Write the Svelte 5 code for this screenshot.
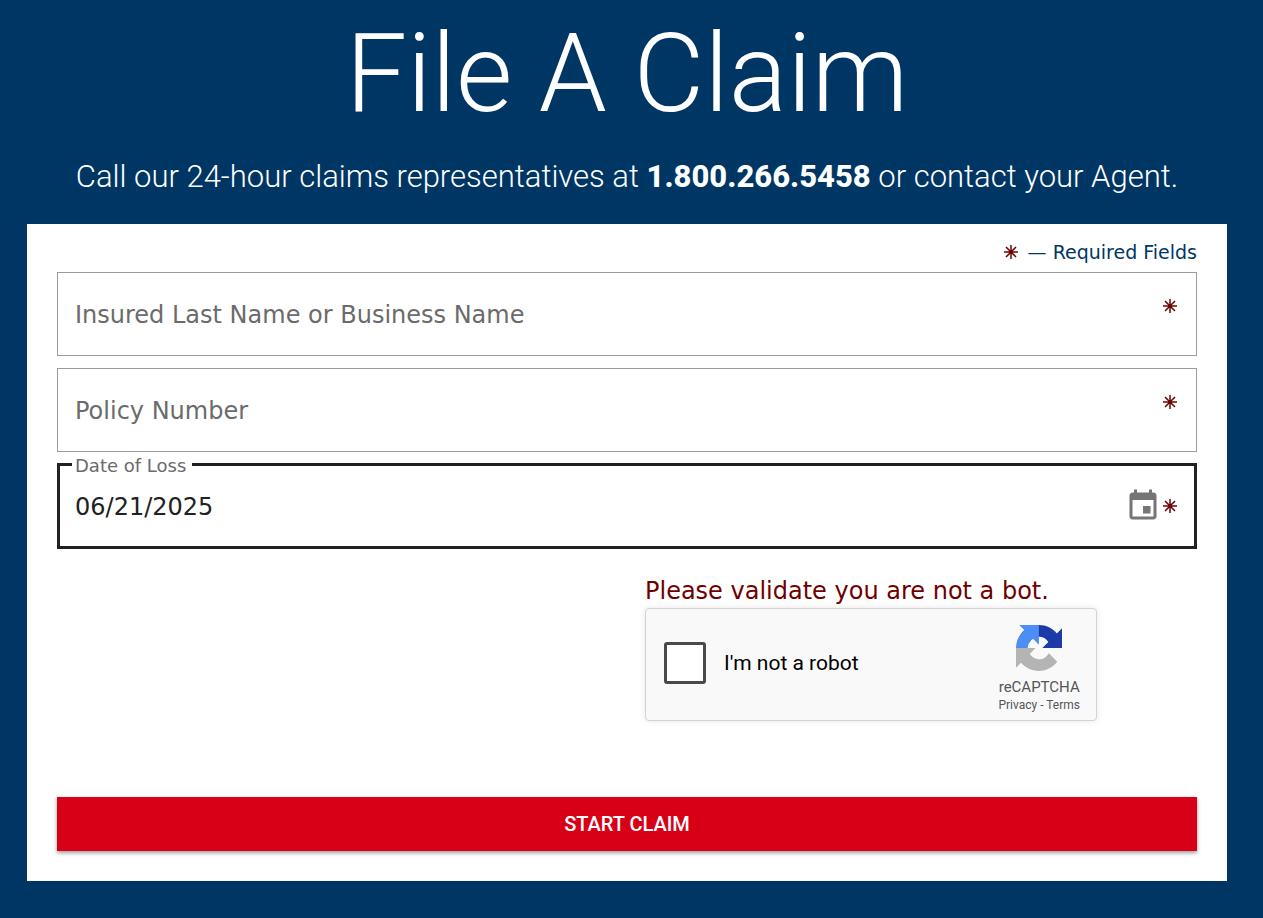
<script lang="ts">
  let form = $state({ name: "", policy: "", lossDate: "06/21/2025" });
  let notRobot = $state(false);

  const textFields = [
    { key: "name", label: "Insured Last Name or Business Name" },
    { key: "policy", label: "Policy Number" },
  ] as const;

  const submit = (event: SubmitEvent) => {
    event.preventDefault();
  };
</script>

{#snippet asterisk()}
  <svg class="asterisk" viewBox="0 0 14 14" aria-hidden="true">
    <path d="M7 0v14M0 7h14M2 2l10 10M12 2L2 12" />
    <circle cx="7" cy="7" r="1" />
  </svg>
{/snippet}

<main class="page">
  <h1>File A Claim</h1>
  <p class="intro">
    Call our 24-hour claims representatives at <strong>1.800.266.5458</strong> or contact your Agent.
  </p>

  <form class="card" onsubmit={submit}>
    <p class="required">{@render asterisk()} <span>— Required Fields</span></p>

    {#each textFields as field (field.key)}
      <div class="field">
        <input
          type="text"
          aria-label={field.label}
          placeholder={field.label}
          bind:value={form[field.key]}
        />
        {@render asterisk()}
      </div>
    {/each}

    <fieldset class="date">
      <legend><label for="loss-date">Date of Loss</label></legend>
      <div class="date-row">
        <input id="loss-date" type="text" bind:value={form.lossDate} />
        <button class="calendar" type="button" aria-label="Choose date">
          <svg viewBox="0 0 24 24" aria-hidden="true">
            <path
              d="M17 12h-5v5h5v-5zM16 1v2H8V1H6v2H5c-1.11 0-1.99.9-1.99 2L3 19c0 1.1.89 2 2 2h14c1.1 0 2-.9 2-2V5c0-1.1-.9-2-2-2h-1V1h-2zm3 18H5V8h14v11z"
            />
          </svg>
        </button>
        {@render asterisk()}
      </div>
    </fieldset>

    <div class="validate">
      <p class="error">Please validate you are not a bot.</p>
      <div class="captcha">
        <input id="robot" type="checkbox" bind:checked={notRobot} />
        <label for="robot">I'm not a robot</label>
        <div class="brand">
          <svg viewBox="0 0 64 64" aria-hidden="true">
            <path
              fill="#1c3aa9"
              d="M64 31.955l-.033-1.37V4.687l-7.16 7.16C50.948 4.674 42.033.093 32.05.093c-10.4 0-19.622 4.96-25.458 12.64l11.736 11.86a15.55 15.55 0 0 1 4.754-5.334c2.05-1.6 4.952-2.906 8.968-2.906.485 0 .86.057 1.135.163 4.976.393 9.288 3.14 11.828 7.124l-8.307 8.307L64 31.953"
            />
            <path
              fill="#4c8df6"
              d="M31.862.094l-1.37.033H4.594l7.16 7.16C4.58 13.147 0 22.06 0 32.046c0 10.4 4.96 19.622 12.64 25.458L24.5 45.768a15.55 15.55 0 0 1-5.334-4.754c-1.6-2.05-2.906-4.952-2.906-8.968 0-.485.057-.86.163-1.135.393-4.976 3.14-9.288 7.124-11.828l8.307 8.307L31.86.095"
            />
            <path
              fill="#b4b4b4"
              d="M.001 32.045l.033 1.37v25.898l7.16-7.16c5.86 7.173 14.774 11.754 24.76 11.754 10.4 0 19.622-4.96 25.458-12.64l-11.736-11.86a15.55 15.55 0 0 1-4.754 5.334c-2.05 1.6-4.952 2.906-8.968 2.906-.485 0-.86-.057-1.135-.163-4.976-.393-9.288-3.14-11.828-7.124l8.307-8.307c-10.522.04-22.4.066-27.295-.005"
            />
          </svg>
          <span class="brand-name">reCAPTCHA</span>
          <span class="links"><a href="#privacy">Privacy</a> - <a href="#terms">Terms</a></span>
        </div>
      </div>
    </div>

    <button class="start" type="submit">START CLAIM</button>
  </form>
</main>

<style>
  :global(body) {
    margin: 0;
    background: #003663;
  }

  .page {
    box-sizing: border-box;
    min-height: 100vh;
    padding: 6px 36px 37px 27px;
    background: #003663;
    color: #fff;
    font-family: "DejaVu Sans", Verdana, sans-serif;
  }

  h1 {
    margin: 0;
    font-family: Roboto, sans-serif;
    font-size: 109px;
    font-weight: 300;
    line-height: 136px;
    text-align: center;
  }

  .intro {
    margin: 15px 0 27px;
    font-family: Roboto, sans-serif;
    font-size: 31px;
    font-weight: 300;
    line-height: 40px;
    text-align: center;
  }

  .intro strong {
    font-weight: 800;
  }

  .card {
    display: flex;
    flex-direction: column;
    padding: 16px 30px 30px;
    background: #fff;
  }

  .required {
    display: flex;
    align-items: center;
    justify-content: flex-end;
    gap: 10px;
    margin: 0 0 8px;
    color: #003663;
    font-size: 19px;
    line-height: 24px;
  }

  .asterisk {
    flex: none;
    width: 14px;
    height: 14px;
    fill: #700000;
    stroke: #700000;
    stroke-width: 1.5;
  }

  .field {
    display: flex;
    align-items: flex-start;
    margin-bottom: 12px;
    padding: 26px 19px 26px 17px;
    border: 1px solid #9b9b9b;
  }

  .field input,
  .date input {
    flex: 1;
    min-width: 0;
    height: 30px;
    padding: 2px 0 0;
    box-sizing: border-box;
    border: 0;
    outline: none;
    background: transparent;
    color: #212121;
    font: inherit;
    font-size: 24px;
    line-height: 28px;
  }

  .field input::placeholder {
    color: #6b6b6b;
    opacity: 1;
  }

  .date {
    min-width: 0;
    margin: -13px 0 26px;
    padding: 0 17px 22px 12px;
    border: 3px solid #212121;
  }

  .date legend {
    padding: 4px 6px 0 3px;
    color: #6b6b6b;
    font-size: 18px;
    line-height: 22px;
  }

  .date-row {
    display: flex;
    align-items: center;
    padding: 11px 0 0 3px;
  }

  .calendar {
    margin-right: 2px;
    padding: 0;
    border: 0;
    background: none;
    cursor: pointer;
  }

  .calendar svg {
    display: block;
    width: 36px;
    height: 36px;
    fill: #757575;
  }

  .validate {
    width: 50%;
    box-sizing: border-box;
    align-self: flex-end;
    padding-left: 18px;
  }

  .error {
    margin: 0 0 1px;
    color: #700000;
    font-size: 24px;
    line-height: 32px;
  }

  .captcha {
    display: flex;
    align-items: center;
    box-sizing: border-box;
    max-width: 452px;
    padding: 4px 16px 7px 18px;
    border: 1px solid #d3d3d3;
    border-radius: 4px;
    background: #f9f9f9;
    box-shadow: 0 0 6px rgb(0 0 0 / 0.1);
    color: #000;
    font-family: Roboto, sans-serif;
  }

  .captcha input {
    appearance: none;
    flex: none;
    width: 42px;
    height: 42px;
    margin: 0 18px 0 0;
    border: 3px solid #4a4a4a;
    border-radius: 3px;
    background: #fff;
  }

  .captcha input:checked {
    background: #4a90e2;
  }

  .captcha label {
    flex: 1;
    font-size: 21px;
  }

  .brand {
    display: flex;
    flex-direction: column;
    align-items: center;
    padding-top: 12px;
    color: #555;
  }

  .brand svg {
    width: 46px;
    height: 46px;
  }

  .brand-name {
    margin-top: 6px;
    font-size: 15px;
    line-height: 20px;
  }

  .links {
    font-size: 12px;
    line-height: 16px;
  }

  .links a {
    color: inherit;
    text-decoration: none;
  }

  .start {
    height: 54px;
    margin-top: 76px;
    border: 0;
    background: #d80017;
    box-shadow: 0 2px 4px rgb(0 0 0 / 0.4);
    color: #fff;
    cursor: pointer;
    font-family: Roboto, sans-serif;
    font-size: 20px;
    font-weight: 500;
  }
</style>
